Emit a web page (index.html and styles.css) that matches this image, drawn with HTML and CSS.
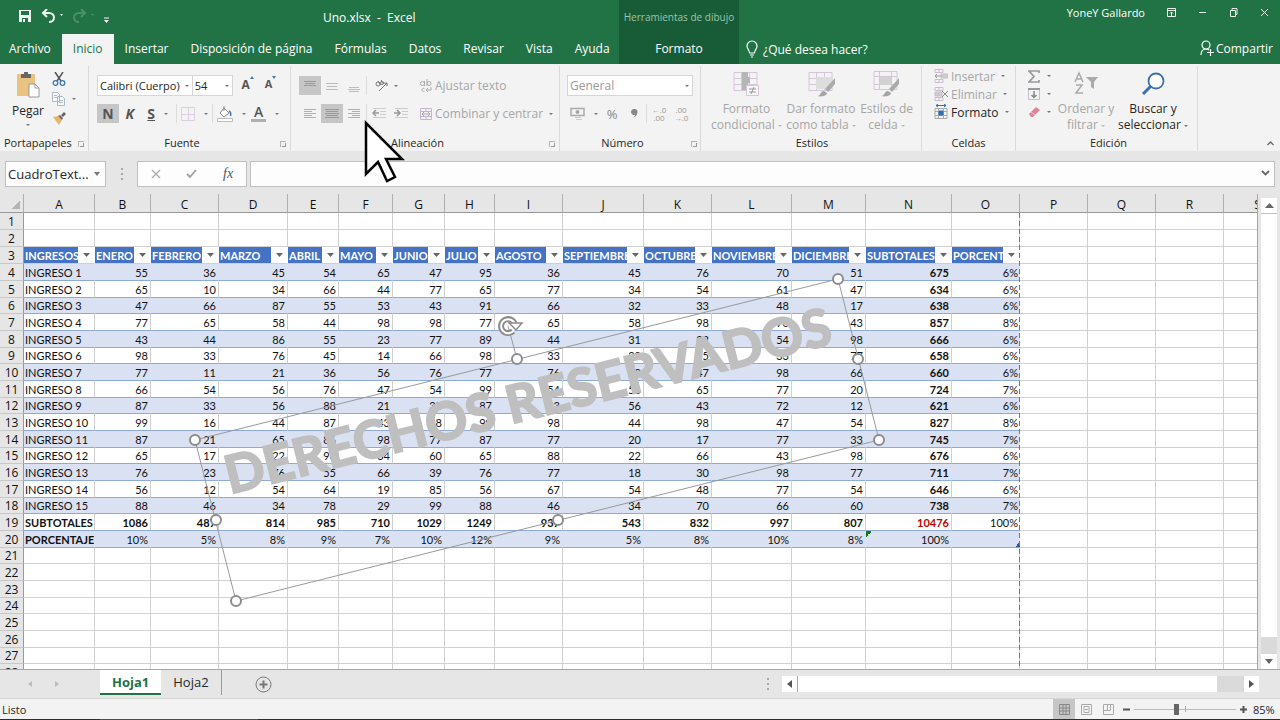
FILE: index.html
```html
<!DOCTYPE html>
<html lang="es">
<head>
  <meta charset="UTF-8">
  <title>Uno.xlsx - Excel</title>
  <link rel="stylesheet" href="styles.css">
</head>
<body>
  <header class="top">
    <div class="titlebar">
      <div class="quick">
        <button aria-label="Guardar"><svg width="14" height="14" viewBox="0 0 14 14"><path d="M1 1h12v12H1z" fill="#f0f7f2"/><path d="M3 2h8v4H3zM4 9h6v4H4z" fill="#217346"/><path d="M5 10h2v3H5z" fill="#f0f7f2"/></svg></button>
        <button aria-label="Deshacer"><svg width="22" height="14" viewBox="0 0 22 14"><path d="M6 0L2 4l4 4M2 4h6c3 0 5 2 5 4.500S11 13 8 13" fill="none" stroke="#f0f7f2" stroke-width="2"/><path d="M19 5h3l-1.500 2z" fill="#f0f7f2"/></svg></button>
        <button aria-label="Rehacer"><svg width="22" height="14" viewBox="0 0 22 14"><path d="M9 0l4 4-4 4M13 4H7C4 4 2 6 2 8.500S4 13 7 13" fill="none" stroke="#4c8f6b" stroke-width="2"/><path d="M19 5h3l-1.500 2z" fill="#4c8f6b"/></svg></button>
        <button aria-label="Personalizar barra"><svg width="7" height="7" viewBox="0 0 7 7"><path d="M1 1h5" stroke="#fff"/><path d="M1 3h5L3.500 6z" fill="#fff"/></svg></button>
      </div>
      <div class="doc-name">Uno.xlsx &nbsp;-&nbsp; Excel</div>
    </div>
    <div class="context-title">Herramientas de dibujo</div>
    <div class="window-bar">
      <span>YoneY Gallardo</span>
      <button aria-label="Opciones de presentación"><svg width="9" height="9" viewBox="0 0 9 9" fill="none" stroke="#e8f3ec"><path d="M.5.5h8v8h-8zM.5 2.500h8M4.500 8V4M3 5.500L4.500 4 6 5.500"/></svg></button>
      <button aria-label="Minimizar"><svg width="9" height="9" viewBox="0 0 9 9"><path d="M1 4.500h7" stroke="#e8f3ec"/></svg></button>
      <button aria-label="Restaurar"><svg width="9" height="9" viewBox="0 0 9 9" fill="none" stroke="#e8f3ec"><path d="M1.500 2.500h5v6h-5zM3 2.500v-2h5v6H6.500"/></svg></button>
      <button aria-label="Cerrar"><svg width="9" height="9" viewBox="0 0 9 9"><path d="M1 1l7 7M8 1L1 8" stroke="#e8f3ec"/></svg></button>
    </div>
    <nav class="tabs">
      <a href="#">Archivo</a>
      <a href="#" class="active">Inicio</a>
      <a href="#">Insertar</a>
      <a href="#">Disposición de página</a>
      <a href="#">Fórmulas</a>
      <a href="#">Datos</a>
      <a href="#">Revisar</a>
      <a href="#">Vista</a>
      <a href="#">Ayuda</a>
    </nav>
    <a href="#" class="context-tab">Formato</a>
    <div class="tabs-end">
      <button class="tell"><svg width="12" height="18" viewBox="0 0 12 18" fill="none" stroke="#fff" stroke-width="1.200"><path d="M3.500 13c0-3-2.500-4-2.500-7a5 5 0 0 1 10 0c0 3-2.500 4-2.500 7zM4 15h4M5 17h2"/></svg>¿Qué desea hacer?</button>
      <button class="share"><svg width="14" height="16" viewBox="0 0 14 16" fill="none" stroke="#fff" stroke-width="1.200"><circle cx="6" cy="5" r="4"/><path d="M1 15c0-4 2-6 5-6 1.500 0 2.500.5 3 1M7 12.500h7M10.500 9v7"/></svg>Compartir</button>
    </div>
  </header>

  <section class="ribbon">
    <div class="group g-clip">
      <div class="group-body">
        <button class="big">
          <svg width="24" height="27" viewBox="0 0 24 27"><path d="M1 3h18v22H1z" fill="#eac282"/><path d="M5 3h3V1h4v2h3v4H5z" fill="#666"/><path d="M13 13h6l4 4v9H13z" fill="#fff" stroke="#999"/><path d="M19 13v4h4" fill="none" stroke="#999"/></svg>
          <span>Pegar</span>
          <i class="arrow"></i>
        </button>
        <div class="stack">
          <button aria-label="Cortar"><svg width="14" height="14" viewBox="0 0 14 14" fill="none"><path d="M3 0l6 9M11 0L5 9" stroke="#555" stroke-width="1.500"/><circle cx="3.500" cy="11" r="2.300" stroke="#3f7ab8" stroke-width="1.300"/><circle cx="10.500" cy="11" r="2.300" stroke="#3f7ab8" stroke-width="1.300"/></svg></button>
          <button aria-label="Copiar"><svg width="13" height="14" viewBox="0 0 13 14" fill="#fafafa" stroke="#a9b8c4"><path d="M.5.5h5l2 2v7h-7zM5.500 4.500h5l2 2v7h-7zM2 3.500h3M2 5.500h3M7 8.500h4M7 10.500h4"/></svg><i class="arrow"></i></button>
          <button aria-label="Copiar formato"><svg width="14" height="14" viewBox="0 0 14 14"><path d="M1 5l5-1 4 4-3 5z" fill="#eab566"/><path d="M6 4l2-1 3 3-1 2zM9 3l3-3 2 2-3 3z" fill="#666"/></svg></button>
        </div>
      </div>
      <div class="group-label has-launch">Portapapeles<button class="launch" aria-label="Más de Portapapeles"></button></div>
    </div>

    <div class="group g-font">
      <div class="group-body rows">
        <div class="line">
          <select class="combo font-name" aria-label="Fuente"><option>Calibri (Cuerpo)</option></select>
          <select class="combo font-size" aria-label="Tamaño"><option>54</option></select>
          <button class="tool grow" aria-label="Aumentar tamaño"><b>A</b><svg width="4" height="3" viewBox="0 0 4 3"><path d="M0 3l2-3 2 3z" fill="#3f7ab8"/></svg></button>
          <button class="tool shrink" aria-label="Reducir tamaño"><b>A</b><svg width="4" height="3" viewBox="0 0 4 3"><path d="M0 0h4L2 3z" fill="#3f7ab8"/></svg></button>
        </div>
        <div class="line">
          <button class="tool on"><b>N</b></button>
          <button class="tool"><b class="italic">K</b></button>
          <button class="tool split"><b class="under">S</b><i class="arrow"></i></button>
          <span class="sep"></span>
          <button class="tool split" aria-label="Bordes"><svg width="14" height="14" viewBox="0 0 14 14" fill="none" stroke="#dccfe2"><path d="M.5.5h13v13H.5zM7.500 0v14M0 7.500h14"/></svg><i class="arrow"></i></button>
          <span class="sep"></span>
          <button class="tool split" aria-label="Color de relleno"><svg width="16" height="16" viewBox="0 0 16 16"><path d="M7 2l5 5-5 4-4-4z" fill="#fff" stroke="#888"/><path d="M7 5V0" stroke="#888"/><path d="M12 5c2 1 2 3 1.500 5" fill="none" stroke="#3f7ab8" stroke-width="1.500"/><path d="M.5 12.500h15v3H.5z" fill="#fff" stroke="#bbb"/></svg><i class="arrow"></i></button>
          <button class="tool split" aria-label="Color de fuente"><b class="ink">A</b><i class="arrow"></i></button>
        </div>
      </div>
      <div class="group-label has-launch">Fuente<button class="launch" aria-label="Más de Fuente"></button></div>
    </div>

    <div class="group g-align">
      <div class="group-body">
        <div class="rows">
          <div class="line">
            <button class="tool on" aria-label="Alinear arriba"><svg width="12" height="12" viewBox="0 0 12 12" stroke="#999"><path d="M0 1.500h12M1 3.500h10M0 5.500h12"/></svg></button>
            <button class="tool" aria-label="Alinear al medio"><svg width="12" height="12" viewBox="0 0 12 12" stroke="#bbb"><path d="M0 3.500h12M1 6.500h10M0 9.500h12"/></svg></button>
            <button class="tool" aria-label="Alinear abajo"><svg width="12" height="12" viewBox="0 0 12 12" stroke="#bbb"><path d="M1 7.500h10M0 9.500h12M1 11.500h10"/></svg></button>
            <span class="sep"></span>
            <button class="tool split" aria-label="Orientación"><svg width="13" height="13" viewBox="0 0 13 13" fill="none" stroke="#777"><circle cx="3" cy="5" r="2"/><path d="M3 2l3 4M6 1l3 4M4 12l8-8M9 4h3v3"/><circle cx="7" cy="4" r="1.500"/></svg><i class="arrow"></i></button>
          </div>
          <div class="line">
            <button class="tool" aria-label="Alinear a la izquierda"><svg width="12" height="11" viewBox="0 0 12 11" stroke="#b0b0b0"><path d="M0 1.500h12M0 3.500h8M0 5.500h12M0 7.500h8M0 9.500h12"/></svg></button>
            <button class="tool on" aria-label="Centrar"><svg width="14" height="11" viewBox="0 0 14 11" stroke="#999"><path d="M0 1.500h14M1 3.500h12M0 5.500h14M1 7.500h12M0 9.500h14"/></svg></button>
            <button class="tool" aria-label="Alinear a la derecha"><svg width="12" height="11" viewBox="0 0 12 11" stroke="#b0b0b0"><path d="M0 1.500h12M4 3.500h8M0 5.500h12M4 7.500h8M0 9.500h12"/></svg></button>
            <span class="sep"></span>
            <button class="tool" aria-label="Disminuir sangría"><svg width="14" height="11" viewBox="0 0 14 11" stroke="#ccc"><path d="M1 .5h13M8 3.500h6M8 6.500h6M1 9.500h13"/><path d="M7 5H1M4 2L1 5l3 3" fill="none" stroke="#999" stroke-width="1.500"/></svg></button>
            <button class="tool" aria-label="Aumentar sangría"><svg width="14" height="11" viewBox="0 0 14 11" stroke="#ccc"><path d="M1 .5h13M8 3.500h6M8 6.500h6M1 9.500h13"/><path d="M0 5h6M3 2l3 3-3 3" fill="none" stroke="#999" stroke-width="1.500"/></svg></button>
          </div>
        </div>
        <span class="sep tall"></span>
        <div class="rows wrap-tools">
          <button class="text-tool"><svg width="12" height="14" viewBox="0 0 12 14" fill="none" stroke="#aaa"><circle cx="2.500" cy="4.500" r="2"/><path d="M4.500 2v5M7 0v7M4.500 9.500c-3-1-4 3 0 3M11 8v3H6M8 9l-2 2 2 2"/><circle cx="9" cy="4.500" r="2"/></svg>Ajustar texto</button>
          <button class="text-tool"><svg width="12" height="12" viewBox="0 0 12 12" fill="none" stroke="#c4b5cc"><path d="M.5.5h11v11H.5zM.5 3.500h11M.5 8.500h11M6 0v3M6 9v3"/><path d="M2 6h8M4 4L2 6l2 2M8 4l2 2-2 2" stroke="#aaa"/></svg>Combinar y centrar<i class="arrow"></i></button>
        </div>
      </div>
      <div class="group-label has-launch">Alineación<button class="launch" aria-label="Más de Alineación"></button></div>
    </div>

    <div class="group g-number">
      <div class="group-body rows">
        <div class="line"><select class="combo number-format" aria-label="Formato de número"><option>General</option></select></div>
        <div class="line">
          <button class="tool split" aria-label="Formato de contabilidad"><svg width="15" height="14" viewBox="0 0 15 14" fill="none" stroke="#aaa"><path d="M1 1.500h13v7H1z" stroke-width="1.500"/><circle cx="7.500" cy="5" r="1.500" fill="#999"/><path d="M5 10.500h6M6 12.500h6" stroke="#ccc"/></svg><i class="arrow"></i></button>
          <button class="tool symbol">%</button>
          <button class="tool" aria-label="Estilo millares"><svg width="7" height="11" viewBox="0 0 7 11"><path d="M3.500 1a3 3 0 0 1 3 3c0 3-2 5-4.500 6 1-1 2-2 2-3.200A3 3 0 1 1 3.500 1z" fill="#888"/></svg></button>
          <span class="sep"></span>
          <button class="tool decimals" aria-label="Aumentar decimales"><span>←.0</span><span>.00</span></button>
          <button class="tool decimals" aria-label="Disminuir decimales"><span>.00</span><span>→.0</span></button>
        </div>
      </div>
      <div class="group-label has-launch">Número<button class="launch" aria-label="Más de Número"></button></div>
    </div>

    <div class="group g-styles">
      <div class="group-body">
        <button class="big dim">
          <svg width="26" height="26" viewBox="0 0 26 26" fill="none"><path d="M1 1.500h23v18H1zM1 7.500h23M1 13.500h23M8.500 1v18M16.500 1v18" stroke="#d6c6da"/><path d="M9 1h6v5h2v6h-2v7H9z" fill="#b5b5b5"/><path d="M13.500 14.500h12v10h-12z" fill="#fafafa" stroke="#d6c6da"/><path d="M16 18h7M16 21h7M21 16l-3 7" stroke="#999"/></svg>
          <span>Formato<br>condicional <i class="arrow"></i></span>
        </button>
        <button class="big dim">
          <svg width="27" height="26" viewBox="0 0 27 26" fill="none"><path d="M1 1.500h23v18H1zM1 7.500h23M1 13.500h23M8.500 1v18M16.500 1v18" stroke="#d6c6da"/><path d="M8 6h17v12H8z" fill="#ddd"/><path d="M27 7v6l-7 8-3-3z" fill="#aaa"/><path d="M9 25c4 0 3-5 7-5l3 2c0 3-6 4-10 3z" fill="#a5a5a5"/></svg>
          <span>Dar formato<br>como tabla <i class="arrow"></i></span>
        </button>
        <button class="big dim">
          <svg width="27" height="26" viewBox="0 0 27 26" fill="none"><path d="M1 .5h23v18H1zM1 5.500h23M1 13.500h23M6.500 0v18M18.500 0v18" stroke="#d6c6da"/><path d="M7 6h11v8H7z" fill="#d2d2d2"/><path d="M26 7v6l-7 8-3-3z" fill="#aaa"/><path d="M8 25c4 0 3-5 7-5l3 2c0 3-6 4-10 3z" fill="#a5a5a5"/></svg>
          <span>Estilos de<br>celda <i class="arrow"></i></span>
        </button>
      </div>
      <div class="group-label">Estilos</div>
    </div>

    <div class="group g-cells">
      <div class="group-body stack">
        <button class="text-tool"><svg width="14" height="14" viewBox="0 0 14 14" fill="none" stroke="#cbbccf"><path d="M1 .5h8v3H1zM1 10.500h8v3H1zM5 0v4M5 10v4"/><path d="M7 5h7v4H7z" fill="#ccc"/><path d="M7 7H1M3 5L1 7l2 2" stroke="#999"/></svg>Insertar<i class="arrow"></i></button>
        <button class="text-tool"><svg width="14" height="14" viewBox="0 0 14 14" fill="none" stroke="#cbbccf"><path d="M1 .5h8v3H1zM1 10.500h8v3H1zM5 0v4M5 10v4"/><path d="M1 5h7v4H1z" fill="#ccc"/><path d="M8 4l6 6M14 4l-6 6" stroke="#888"/></svg>Eliminar<i class="arrow"></i></button>
        <button class="text-tool live"><svg width="14" height="16" viewBox="0 0 14 16" fill="none" stroke="#aaa"><path d="M1 4.500h12v10H1zM1 7.500h12M1 11.500h12M4.500 4v11M9.500 4v11"/><path d="M5 7h4v4H5z" fill="#2f6eb5" stroke="#2f6eb5"/><path d="M2 1.500h10M4 0L2 1.500 4 3M10 0l2 1.500L10 3" stroke="#2f6eb5"/></svg>Formato<i class="arrow"></i></button>
      </div>
      <div class="group-label">Celdas</div>
    </div>

    <div class="group g-edit">
      <div class="group-body">
        <div class="stack">
          <button aria-label="Autosuma"><svg width="12" height="13" viewBox="0 0 12 13" fill="none" stroke="#999" stroke-width="1.700"><path d="M11 3V1H1l5 5.500L1 12h10v-2"/></svg><i class="arrow"></i></button>
          <button aria-label="Rellenar"><svg width="12" height="12" viewBox="0 0 12 12" fill="none" stroke="#cbbccf"><path d="M.5.5h11v11H.5z"/><path d="M0 1h12" stroke="#999" stroke-width="2"/><path d="M6 3v6M3.500 7L6 9.500 8.500 7" stroke="#888" stroke-width="1.500"/></svg><i class="arrow"></i></button>
          <button aria-label="Borrar"><svg width="12" height="12" viewBox="0 0 12 12"><path d="M8 1l4 3-7 7H3L1 8z" fill="#e0829a"/><path d="M3 6l4 3" stroke="#f3c3cf"/></svg><i class="arrow"></i></button>
        </div>
        <button class="big dim">
          <svg width="24" height="26" viewBox="0 0 24 26" fill="none" stroke="#aaa" stroke-width="1.500"><path d="M1 11l4-9 4 9M2.500 8h5M2 14h6l-6 8h7"/><path d="M12 6h12l-4 5v7l-3-2v-5z" fill="#aaa" stroke="none"/></svg>
          <span>Ordenar y<br>filtrar <i class="arrow"></i></span>
        </button>
        <button class="big">
          <svg width="24" height="26" viewBox="0 0 24 26" fill="none" stroke="#3b6fae"><circle cx="15" cy="10" r="7.500" fill="#fff" stroke-width="1.800"/><path d="M9.500 15.500L2 23" stroke-width="3"/></svg>
          <span>Buscar y<br>seleccionar <i class="arrow"></i></span>
        </button>
      </div>
      <div class="group-label">Edición</div>
    </div>

    <button class="collapse" aria-label="Contraer la cinta"><svg width="7" height="5" viewBox="0 0 7 5" fill="none" stroke="#666" stroke-width="1.300"><path d="M.5 4l3-3 3 3"/></svg></button>
  </section>

  <section class="formula-row">
    <select class="name-box" aria-label="Cuadro de nombres"><option>CuadroText...</option></select>
    <span class="dots"></span>
    <div class="formula-buttons">
      <button aria-label="Cancelar"><svg width="10" height="10" viewBox="0 0 10 10"><path d="M1 1l8 8M9 1L1 9" stroke="#aaa" stroke-width="1.300"/></svg></button>
      <button aria-label="Introducir"><svg width="11" height="10" viewBox="0 0 11 10"><path d="M1 5l3 3 6-7" fill="none" stroke="#a0a0a0" stroke-width="1.800"/></svg></button>
      <button class="fx" aria-label="Insertar función">fx</button>
    </div>
    <div class="formula-input">
      <input type="text" aria-label="Barra de fórmulas">
      <button aria-label="Expandir"><svg width="9" height="6" viewBox="0 0 9 6" fill="none" stroke="#666" stroke-width="1.800"><path d="M1 1l3.500 3.500L8 1"/></svg></button>
    </div>
  </section>

  <main class="sheet">
    <div class="sheet-view">
      <table class="cells">
        <colgroup id="cols"></colgroup>
        <thead><tr id="letters"></tr></thead>
        <tbody id="rows"></tbody>
      </table>
      <svg class="drawing" width="1257" height="476" viewBox="0 194 1257 476">
        <path d="M1019.500 213v457" stroke="#777" stroke-dasharray="5 3"/>
        <text class="watermark" x="230" y="494" transform="rotate(-14 230 494)">DERECHOS RESERVADOS</text>
        <path d="M838 279L195 440l41 161 643-161zM508 326l9 33" fill="none" stroke="#999"/>
        <g fill="#fff" stroke="#8c8c8c" stroke-width="2">
          <circle cx="838" cy="279" r="5"/><circle cx="517" cy="359" r="5"/><circle cx="195" cy="440" r="5"/>
          <circle cx="216" cy="520" r="5"/><circle cx="236" cy="601" r="5"/><circle cx="558" cy="520" r="5"/>
          <circle cx="879" cy="440" r="5"/><circle cx="858" cy="359" r="5"/>
        </g>
        <path d="M513 331a7 7 0 1 1 2-6" fill="none" stroke="#8c8c8c" stroke-width="6"/>
        <path d="M514 330a7 7 0 1 1 1-5" fill="none" stroke="#fff" stroke-width="2"/>
        <path d="M509 323h13l-6 7z" fill="#fff" stroke="#8c8c8c" stroke-width="1.500"/>
      </svg>
    </div>
    <div class="vscroll">
      <button aria-label="Desplazar arriba"><svg width="9" height="5" viewBox="0 0 9 5"><path d="M0 5l4.500-5L9 5z" fill="#666"/></svg></button>
      <div class="thumb"></div>
      <div class="track"></div>
      <button aria-label="Desplazar abajo"><svg width="8" height="5" viewBox="0 0 8 5"><path d="M0 0h8L4 5z" fill="#666"/></svg></button>
    </div>
  </main>

  <footer class="bottom">
    <div class="sheet-tabs">
      <div class="tab-nav">
        <button aria-label="Hoja anterior"><svg width="4" height="6" viewBox="0 0 4 6"><path d="M4 0v6L0 3z" fill="#bbb"/></svg></button>
        <button aria-label="Hoja siguiente"><svg width="4" height="6" viewBox="0 0 4 6"><path d="M0 0v6l4-3z" fill="#bbb"/></svg></button>
      </div>
      <a href="#" class="sheet-tab current">Hoja1</a>
      <a href="#" class="sheet-tab">Hoja2</a>
      <button class="add" aria-label="Hoja nueva"><svg width="17" height="17" viewBox="0 0 17 17" fill="none" stroke="#777"><circle cx="8.500" cy="8.500" r="7.500"/><path d="M8.500 4.500v8M4.500 8.500h8" stroke-width="2"/></svg></button>
      <span class="dots"></span>
      <div class="hscroll">
        <button aria-label="Desplazar a la izquierda"><svg width="5" height="8" viewBox="0 0 5 8"><path d="M5 0v8L0 4z" fill="#555"/></svg></button>
        <div class="thumb"></div>
        <div class="track"></div>
        <button aria-label="Desplazar a la derecha"><svg width="5" height="8" viewBox="0 0 5 8"><path d="M0 0v8l5-4z" fill="#555"/></svg></button>
      </div>
    </div>
    <div class="status">
      <span class="ready">Listo</span>
      <button class="view on" aria-label="Normal"><svg width="11" height="11" viewBox="0 0 11 11" fill="none" stroke="#888"><path d="M.5.5h10v10H.5zM.5 4h10M.5 7h10M4 .5v10M7 .5v10"/></svg></button>
      <button class="view" aria-label="Diseño de página"><svg width="11" height="11" viewBox="0 0 11 11" fill="none" stroke="#aaa"><path d="M.5.5h10v10H.5zM3 2.500h5v6H3zM4 5.500h3"/></svg></button>
      <button class="view" aria-label="Vista previa de salto"><svg width="11" height="11" viewBox="0 0 11 11" fill="none" stroke="#aaa"><path d="M.5.5h10v10H.5zM4.500 0v6M.5 6.500h7V0"/></svg></button>
      <button class="zoom-step" aria-label="Alejar"><svg width="7" height="7" viewBox="0 0 7 7"><path d="M0 3.500h7" stroke="#555" stroke-width="2"/></svg></button>
      <input type="range" class="zoom" min="0" max="100" value="41" aria-label="Zoom">
      <button class="zoom-step" aria-label="Acercar"><svg width="7" height="7" viewBox="0 0 7 7"><path d="M0 3.500h7M3.500 0v7" stroke="#555" stroke-width="2"/></svg></button>
      <span class="percent">85%</span>
    </div>
  </footer>

  <svg class="pointer" width="42" height="66" viewBox="0 0 42 66"><path d="M3 4v51l12-12 9 19 8-4-9-18h16z" fill="#fff" stroke="#000" stroke-width="2.500"/></svg>

  <script src="sheet.js"></script>
</body>
</html>
```
FILE: styles.css
```css
* { box-sizing: border-box; }
body {
  margin: 0;
  height: 100vh;
  display: flex;
  flex-direction: column;
  overflow: hidden;
  background: #e6e6e6;
  color: #262626;
  font-family: "Open Sans", "Noto Sans", sans-serif;
  font-size: 12px;
}
button, select, input { font: inherit; color: inherit; margin: 0; padding: 0; border: 0; background: none; }
button { display: flex; align-items: center; justify-content: center; white-space: nowrap; }
a { color: inherit; text-decoration: none; }
svg { display: block; flex: none; }

/* title bar and tabs */
.top {
  display: grid;
  grid-template-columns: 619px 120px 1fr;
  grid-template-rows: 34px 30px;
  background: #217346;
  color: #fff;
}
.titlebar { display: flex; align-items: center; }
.quick { display: flex; align-items: center; gap: 9px; padding-left: 18px; height: 26px; width: 323px; }
.quick button { align-self: flex-start; height: 24px; }
.quick button:last-child { margin-top: 4px; }
.context-title { background: #185c37; color: #9cc4ac; font-size: 10px; line-height: 34px; text-align: center; white-space: nowrap; }
.window-bar { display: flex; align-items: center; justify-content: flex-end; gap: 22px; height: 24px; padding-right: 11px; font-size: 11px; }
.tabs { display: flex; }
.tabs a { padding: 0 11px; line-height: 30px; white-space: nowrap; }
.tabs a:first-child { padding-left: 9px; }
.tabs .active { background: #f3f3f3; color: #217346; }
.context-tab { background: #185c37; line-height: 30px; text-align: center; }
.tabs-end { display: flex; justify-content: space-between; padding: 0 7px; }
.tell { gap: 5px; }
.share { gap: 2px; padding-bottom: 2px; }

/* ribbon */
.ribbon { display: flex; height: 87px; background: #f3f3f3; padding-top: 2px; }
.group { display: flex; flex-direction: column; flex: none; border-right: 1px solid #dadada; padding: 0 8px; }
.g-clip { width: 89px; }
.g-font { width: 202px; }
.g-align { width: 269px; }
.g-number { width: 141px; padding: 0 7px; }
.g-styles { width: 221px; padding: 0 8px 0 10px; }
.g-cells { width: 94px; padding: 0 12px; }
.g-edit { width: 182px; padding-left: 12px; }
.group-body { flex: 1; display: flex; }
.group-label { position: relative; height: 17px; font-size: 11px; line-height: 17px; text-align: center; white-space: nowrap; }
.has-launch { padding-right: 15px; }
.g-clip .group-label { margin-left: -4px; }
.launch { position: absolute; right: -4px; bottom: 4px; width: 6px; height: 6px; border: solid #b4b4b4; border-width: 1px 0 0 1px; }
.launch::after { content: ""; width: 3px; height: 3px; border: solid #999; border-width: 0 1px 1px 0; }
.arrow { display: inline-block; flex: none; border: 2px solid transparent; border-top-color: #777; border-bottom: 0; vertical-align: middle; }
.big { flex-direction: column; justify-content: flex-start; padding-top: 5px; gap: 4px; line-height: 16px; }
.g-clip .big { width: 40px; gap: 5px; }
.dim, .text-tool { color: #a6a6a6; }
.dim .arrow { border-top-color: #bbb; }
.live { color: #262626; }
.g-styles .group-body { justify-content: space-between; }
.g-edit .big { width: 66px; }
.g-edit .big:last-child { width: 68px; }
.stack { display: flex; flex-direction: column; padding-top: 1px; }
.stack button { height: 18px; gap: 7px; justify-content: flex-start; }
.stack .text-tool { gap: 3px; }
.g-clip .stack { padding: 3px 0 0 4px; }
.g-clip .stack button { height: 20px; }
.g-edit .stack { width: 25px; }
.text-tool .arrow { margin-left: 3px; }
.rows { display: flex; flex-direction: column; padding-top: 9px; gap: 7px; }
.line { display: flex; align-items: center; height: 21px; }
.combo {
  height: 21px;
  border: 1px solid #d6d6d6;
  appearance: none;
  padding: 0 2px;
  font-size: 11px;
  background: #fff url("data:image/svg+xml,%3Csvg xmlns='http://www.w3.org/2000/svg' width='4' height='2'%3E%3Cpath d='M0 0h4L2 2z' fill='%23777'/%3E%3C/svg%3E") no-repeat right 3px center;
}
.font-name { width: 100px; margin-right: -1px; }
.font-size { width: 43px; }
.number-format { width: 126px; color: #999; font-size: 12px; }
.tool { width: 22px; height: 19px; font-size: 14px; color: #555; }
.on { background: #c6c6c6; }
.grow, .shrink { width: 24px; align-items: flex-start; font-size: 12px; }
.grow { margin-left: 3px; }
.shrink { font-size: 11px; }
.italic { font-style: italic; }
.under { text-decoration: underline; }
.ink { line-height: 14px; border-bottom: 3px solid #b0b0b0; padding: 0 3px; font-weight: 600; }
.split { width: 34px; gap: 9px; }
.sep { width: 1px; height: 19px; margin: 0 1px; background: #dcdcdc; }
.tall { height: 62px; margin: 2px 6px 0 2px; }
.g-align .split { width: 37px; gap: 6px; }
.wrap-tools .text-tool { height: 21px; gap: 3px; justify-content: flex-start; }
.symbol { font-size: 13px; color: #888; }
.decimals { flex-direction: column; font-size: 8px; line-height: 8px; color: #999; }
.collapse { margin: auto 6px 5px auto; }

/* formula bar */
.formula-row { display: flex; align-items: center; padding: 10px 5px 7px; height: 43px; }
.name-box {
  width: 101px;
  height: 26px;
  padding: 0 2px;
  border: 1px solid #c0c0c0;
  appearance: none;
  background: #fdfdfd url("data:image/svg+xml,%3Csvg xmlns='http://www.w3.org/2000/svg' width='6' height='4'%3E%3Cpath d='M0 0h6L3 4z' fill='%23777'/%3E%3C/svg%3E") no-repeat right 5px center;
  font-size: 13px;
}
.dots { width: 2px; height: 12px; background: repeating-linear-gradient(#aaa 0 2px, transparent 2px 5px); }
.formula-row .dots { margin: 0 14px 0 15px; }
.formula-buttons { display: flex; justify-content: space-around; width: 110px; height: 26px; border: 1px solid #c0c0c0; background: #fdfdfd; }
.fx { font-family: "Liberation Serif", serif; font-style: italic; font-size: 14px; color: #555; }
.formula-input { flex: 1; display: flex; height: 26px; margin-left: 3px; border: 1px solid #c0c0c0; background: #fdfdfd; }
.formula-input input { flex: 1; outline: 0; }
.formula-input button { width: 18px; height: 22px; }

/* cells */
.sheet { flex: 1; display: flex; min-height: 0; border-bottom: 1px solid #a6a6a6; }
.sheet-view { flex: 1; position: relative; overflow: hidden; border-right: 1px solid #a6a6a6; }
.cells { table-layout: fixed; width: 1292px; border-collapse: separate; border-spacing: 0; background: #fff; font: 11px/15px Lato, sans-serif; color: #111; }
.cells th, .cells td { height: 17px; padding: 0 2px; border: solid #d0d0d0; border-width: 0 1px 1px 0; overflow: hidden; white-space: nowrap; text-align: right; }
.cells tbody tr:nth-child(3n) > * { height: 16px; }
.cells thead th { height: 19px; padding-top: 3px; background: #e6e6e6; border-color: #b0b0b0; border-bottom-color: #999; text-align: center; font: 12px/15px "Open Sans", sans-serif; }
.cells thead th:first-child { background: linear-gradient(135deg, #e6e6e6 50%, #b4b4b4 50%) no-repeat 11px 6px / 9px 9px #e6e6e6; }
.cells tbody th { background: #e6e6e6; border-right-color: #999; border-bottom-color: #c8c8c8; text-align: center; font: 12px/15px "Open Sans", sans-serif; padding: 0; }
.cells .text { text-align: left; padding: 0 0 0 1px; }
.cells .bold { font-weight: 700; }
.cells .red { color: #c00000; }
.cells .table-cell { border-bottom-color: #8ea9db; }
.cells .banded { background: #d9e1f2; border-right-color: #d9e1f2; }
.cells .head { padding: 0; border-right-color: #fff; }
.cells .last { border-right: 0; }
.head-box { display: flex; background: #4472c4; color: #fff; font-weight: 700; line-height: 17px; height: 16px; }
.head-box span { flex: 1; min-width: 0; overflow: hidden; padding-left: 1px; text-align: left; }
.head-box button { width: 16px; height: 16px; background: #fff; }
.cells .warn { background: linear-gradient(135deg, #107c10 50%, transparent 50%) no-repeat 0 0 / 6px 6px #d9e1f2; }
.cells .corner { background: linear-gradient(135deg, transparent 50%, #3250a8 50%) no-repeat 100% 100% / 5px 5px #d9e1f2; }
.drawing { position: absolute; left: 0; top: 0; }
.watermark { font: 700 52px Lato, sans-serif; fill: #bfbfbf; stroke: #bfbfbf; stroke-width: 2px; }

/* scroll bars */
.vscroll { width: 22px; display: flex; flex-direction: column; padding: 4px 3px 0; }
.vscroll button { height: 15px; background: #fff; }
.vscroll .thumb { flex: 1; background: #fff; border-top: 1px solid #c0c0c0; }
.vscroll .track { height: 17px; background: #dadada; }
.hscroll { display: flex; width: 477px; height: 16px; margin: 0 21px 0 13px; }
.hscroll button { width: 15px; background: #fff; }
.hscroll .thumb { flex: 1; background: #fff; border-left: 1px solid #aaa; }
.hscroll .track { width: 27px; background: #dadada; }

/* bottom */
.sheet-tabs { display: flex; align-items: center; height: 28px; }
.tab-nav { display: flex; gap: 23px; width: 100px; padding-left: 28px; }
.sheet-tab { align-self: flex-start; height: 25px; line-height: 24px; padding: 0 12px; font-size: 13px; border-right: 1px solid #999; }
.current { background: #fff; border-right: 0; border-bottom: 2px solid #217346; color: #217346; font-weight: 700; }
.add { margin: 0 auto 0 33px; }
.status {
  display: flex;
  align-items: center;
  height: 22px;
  padding: 0 5px 1px 2px;
  background: linear-gradient(90deg, #1d3338 100px, #0f6b5c 100px 258px, #1d3338 258px) no-repeat bottom / 100% 1px #f3f3f3;
  border-top: 1px solid #d4d4d4;
  font-size: 11px;
}
.ready { margin-right: auto; }
.view { width: 22px; height: 20px; }
.zoom-step { width: 11px; margin: 0 2px; }
.zoom { width: 102px; height: 14px; appearance: none; background: linear-gradient(#aaa, #aaa) no-repeat 50% 50% / 1px 6px, linear-gradient(#bbb, #bbb) no-repeat 0 50% / 100% 1px; }
.zoom::-webkit-slider-thumb { appearance: none; width: 5px; height: 11px; background: #666; }
.percent { width: 22px; margin-left: 2px; }

.pointer { position: absolute; left: 363px; top: 119px; }
```
FILE: sheet.js
```js
const widths = [24, 71, 56, 68, 69, 51, 54, 52, 50, 68, 81, 68, 80, 74, 86, 68, 68, 68, 68, 68];
const letters = 'ABCDEFGHIJKLMNOPQRS';
const heads = ['INGRESOS', 'ENERO', 'FEBRERO', 'MARZO', 'ABRIL', 'MAYO', 'JUNIO', 'JULIO', 'AGOSTO',
  'SEPTIEMBRE', 'OCTUBRE', 'NOVIEMBRE', 'DICIEMBRE', 'SUBTOTALES', 'PORCENTAJE'];
const data = [
  ['INGRESO 1', 55, 36, 45, 54, 65, 47, 95, 36, 45, 76, 70, 51, 675, '6%'],
  ['INGRESO 2', 65, 10, 34, 66, 44, 77, 65, 77, 34, 54, 61, 47, 634, '6%'],
  ['INGRESO 3', 47, 66, 87, 55, 53, 43, 91, 66, 32, 33, 48, 17, 638, '6%'],
  ['INGRESO 4', 77, 65, 58, 44, 98, 98, 77, 65, 58, 98, 76, 43, 857, '8%'],
  ['INGRESO 5', 43, 44, 86, 55, 23, 77, 89, 44, 31, 22, 54, 98, 666, '6%'],
  ['INGRESO 6', 98, 33, 76, 45, 14, 66, 98, 33, 30, 55, 33, 77, 658, '6%'],
  ['INGRESO 7', 77, 11, 21, 36, 56, 76, 77, 76, 19, 47, 98, 66, 660, '6%'],
  ['INGRESO 8', 66, 54, 56, 76, 47, 54, 99, 54, 56, 65, 77, 20, 724, '7%'],
  ['INGRESO 9', 87, 33, 56, 88, 21, 33, 87, 33, 56, 43, 72, 12, 621, '6%'],
  ['INGRESO 10', 99, 16, 44, 87, 43, 98, 99, 98, 44, 98, 47, 54, 827, '8%'],
  ['INGRESO 11', 87, 21, 65, 86, 98, 77, 87, 77, 20, 17, 77, 33, 745, '7%'],
  ['INGRESO 12', 65, 17, 22, 96, 34, 60, 65, 88, 22, 66, 43, 98, 676, '6%'],
  ['INGRESO 13', 76, 23, 76, 55, 66, 39, 76, 77, 18, 30, 98, 77, 711, '7%'],
  ['INGRESO 14', 56, 12, 54, 64, 19, 85, 56, 67, 54, 48, 77, 54, 646, '6%'],
  ['INGRESO 15', 88, 46, 34, 78, 29, 99, 88, 46, 34, 70, 66, 60, 738, '7%'],
  ['SUBTOTALES', 1086, 487, 814, 985, 710, 1029, 1249, 937, 543, 832, 997, 807, 10476, '100%'],
  ['PORCENTAJE', '10%', '5%', '8%', '9%', '7%', '10%', '12%', '9%', '5%', '8%', '10%', '8%', '100%', '']
];

document.getElementById('cols').innerHTML = widths.map(w => `<col style="width:${w}px">`).join('');
document.getElementById('letters').innerHTML = '<th></th>' + [...letters].map(l => `<th>${l}</th>`).join('');

function headCell(name) {
  return `<td class="head"><div class="head-box"><span>${name}</span><button aria-label="Filtrar ${name}">` +
    '<svg width="7" height="4" viewBox="0 0 7 4"><path d="M0 0h7L3.5 4z" fill="#666"/></svg></button></div></td>';
}

function dataCell(row, col) {
  const cls = ['table-cell'];
  if (row % 2 === 0) cls.push('banded');
  if (col === 0) cls.push('text');
  if ((col === 0 && row >= 19) || (col === 13 && row < 20) || (row === 19 && col > 0 && col < 14)) cls.push('bold');
  if (row === 19 && col === 13) cls.push('red');
  if (row === 20 && col === 13) cls.push('warn');
  if (row === 20 && col === 14) cls.push('corner');
  if (col === 14) cls.push('last');
  return `<td class="${cls.join(' ')}">${data[row - 4][col]}</td>`;
}

let html = '';
for (let row = 1; row <= 28; row++) {
  html += `<tr><th>${row}</th>`;
  for (let col = 0; col < letters.length; col++) {
    if (row === 3 && col < 15) html += headCell(heads[col]);
    else if (row >= 4 && row <= 20 && col < 15) html += dataCell(row, col);
    else html += '<td></td>';
  }
  html += '</tr>';
}
document.getElementById('rows').innerHTML = html;
```
